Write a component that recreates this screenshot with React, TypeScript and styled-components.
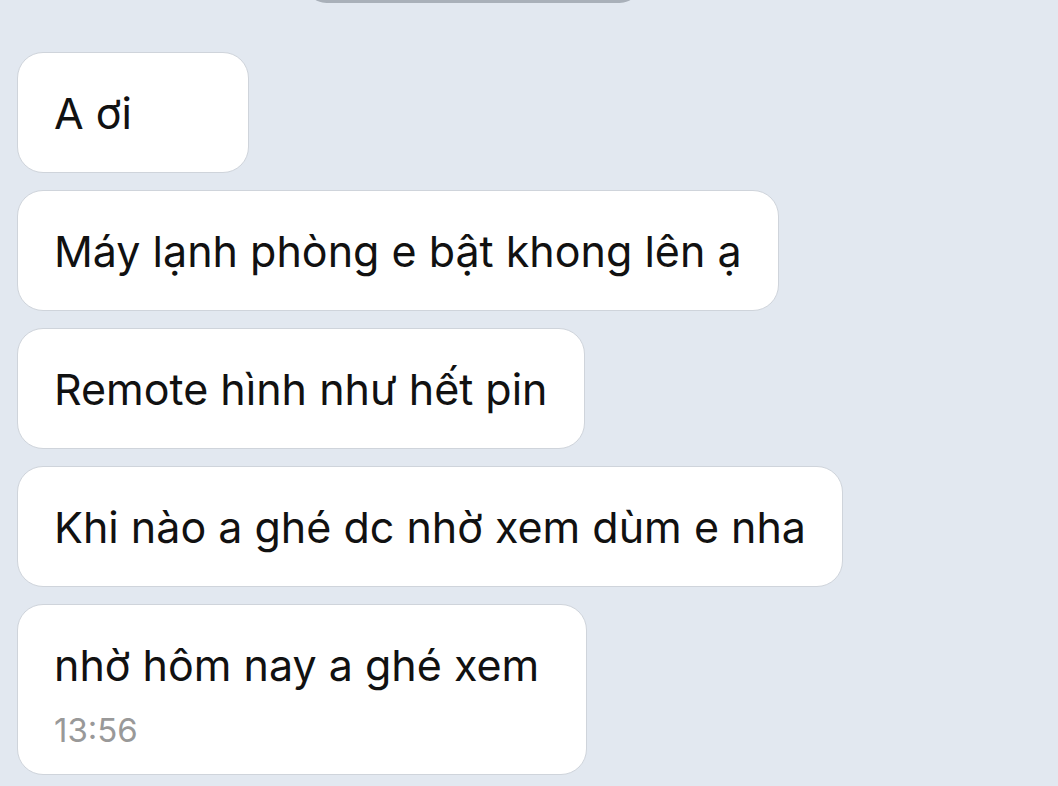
import React from 'react';
import styled, { createGlobalStyle } from 'styled-components';

interface MessageType {
    id: number;
    text: string;
    time?: string;
}

const messages: MessageType[] = [
    { id: 1, text: 'A ơi' },
    { id: 2, text: 'Máy lạnh phòng e bật khong lên ạ' },
    { id: 3, text: 'Remote hình như hết pin' },
    { id: 4, text: 'Khi nào a ghé dc nhờ xem dùm e nha' },
    { id: 5, text: 'nhờ hôm nay a ghé xem', time: '13:56' },
];

const App: React.FC = () => {
    return (<>
        <GlobalStyle/>
        <Screen>
            <DateChip/>
            <MessageList>
                {messages.map((msg) => (
                    <Bubble key={msg.id} $hasTime={!!msg.time}>
                        <MessageText>{msg.text}</MessageText>
                        {msg.time && <Time>{msg.time}</Time>}
                    </Bubble>
                ))}
            </MessageList>
        </Screen>
        </>
    );
};

export default App;

const GlobalStyle = createGlobalStyle`
  html, body {
    margin: 0;
    padding: 0;
    background: #e2e8f0;
  }
  body {
    font-family: Inter, "Noto Sans", sans-serif;
    -webkit-font-smoothing: antialiased;
  }
`;

const Screen = styled.div`
  width: 1058px;
  height: 786px;
  overflow: hidden;
  background: #e2e8f0;
  display: flex;
  flex-direction: column;
`;

// date pill scrolled mostly out of view
const DateChip = styled.div`
  align-self: flex-start;
  margin-left: 305px;
  margin-top: -40px;
  width: 336px;
  height: 43px;
  border-radius: 22px;
  background: #d6dde5;
  border-bottom: 3px solid #a9b0b9;
  box-sizing: border-box;
`;

const MessageList = styled.div`
  display: flex;
  flex-direction: column;
  align-items: flex-start;
  gap: 17px;
  padding: 49px 0 0 17px;
`;

const Bubble = styled.div<{ $hasTime?: boolean }>`
  min-width: 158px;
  padding: 33px ${(p) => (p.$hasTime ? '47px' : '36px')} 31px 36px;
  background: #ffffff;
  border: 1.5px solid #cfd4db;
  border-radius: 26px;
  display: flex;
  flex-direction: column;
`;

const MessageText = styled.div`
  font-size: 43px;
  line-height: 55px;
  color: #111111;
  white-space: nowrap;
`;

const Time = styled.div`
  margin-top: 15px;
  margin-bottom: -9px;
  font-size: 33px;
  line-height: 44px;
  color: #999999;
`;
